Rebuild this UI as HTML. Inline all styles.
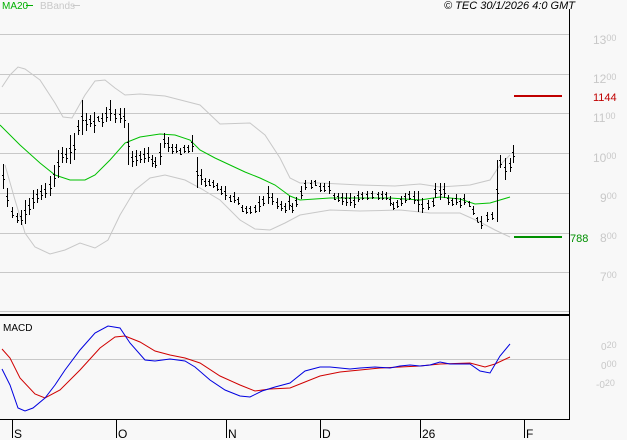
<!DOCTYPE html>
<html><head><style>
body{margin:0;background:#f8f8f8;width:627px;height:440px;overflow:hidden;font-family:"Liberation Sans",sans-serif}
</style></head><body>
<svg width="627" height="440" xmlns="http://www.w3.org/2000/svg" style="position:absolute;left:0;top:0">
<rect width="627" height="440" fill="#f8f8f8"/>
<g stroke="#c8c8c8" stroke-width="1">
<line x1="0" y1="34.5" x2="569" y2="34.5"/><line x1="0" y1="74.5" x2="569" y2="74.5"/>
<line x1="0" y1="113.5" x2="569" y2="113.5"/><line x1="0" y1="153.5" x2="569" y2="153.5"/>
<line x1="0" y1="193.5" x2="569" y2="193.5"/><line x1="0" y1="233.5" x2="569" y2="233.5"/>
<line x1="0" y1="272.5" x2="569" y2="272.5"/><line x1="0" y1="311.5" x2="569" y2="311.5"/>
<line x1="0" y1="359.5" x2="569" y2="359.5"/>
</g>
<line x1="0" y1="315" x2="569" y2="315" stroke="#000" stroke-width="2"/>
<line x1="569.5" y1="9" x2="569.5" y2="420" stroke="#000"/>
<line x1="0" y1="419.5" x2="570" y2="419.5" stroke="#000"/>
<g stroke="#000"><line x1="12.5" y1="420" x2="12.5" y2="438"/><line x1="116.5" y1="420" x2="116.5" y2="438"/><line x1="226.5" y1="420" x2="226.5" y2="438"/><line x1="320.5" y1="420" x2="320.5" y2="438"/><line x1="420.5" y1="420" x2="420.5" y2="438"/><line x1="524.5" y1="420" x2="524.5" y2="438"/></g>
<g font-size="12" fill="#000"><text x="14" y="438">S</text><text x="118" y="438">O</text><text x="228" y="438">N</text><text x="322" y="438">D</text><text x="422" y="438">26</text><text x="526" y="438">F</text></g>
<polyline fill="none" stroke="#c8c8c8" points="2,87 10,75 18,67 25,69 40,80 55,103 63,117 72,118 85,95 95,81 105,80 115,88 125,95 140,94 165,96 200,105 220,124 250,123 265,135 280,158 290,178 300,183 320,183 360,185 395,186 420,184 440,187 470,185 490,180 500,165 510,155"/>
<polyline fill="none" stroke="#c8c8c8" points="5,165 15,200 25,233 35,247 50,254 65,250 80,243 95,248 108,240 120,215 135,190 150,178 165,175 185,180 200,188 220,200 240,220 255,229 270,230 285,223 300,215 330,210 360,211 400,210 430,213 460,213 480,222 495,230 510,237"/>
<polyline fill="none" stroke="#00c000" points="0,125 20,145 40,163 55,175 70,180 85,180 95,175 110,160 125,143 140,137 160,134 175,135 190,140 200,150 215,158 230,165 245,172 260,178 275,185 290,196 300,200 330,198 360,198 390,198 420,200 440,197 460,199 475,204 490,203 500,200 510,197"/>
<g stroke="#000" id="bars"></g>
<polyline fill="none" stroke="#d00000" points="2,349 10,358 20,378 35,394 45,398 60,390 80,370 100,348 115,337 125,336 140,342 155,351 170,355 185,358 200,363 220,376 240,385 255,391 270,389 290,388 305,382 320,376 340,372 360,370 380,368 400,367 420,366 440,364 470,363 485,367 495,364 510,357"/>
<polyline fill="none" stroke="#0000e0" points="2,369 10,385 18,408 25,411 33,408 45,398 55,385 65,370 80,350 95,333 108,326 120,328 130,343 145,360 155,361 170,359 185,361 195,367 210,380 225,390 240,396 250,397 262,391 275,387 290,383 305,371 320,367 330,367 350,369 360,368 375,367 390,368 400,366 410,365 420,366 430,365 440,362 450,364 460,364 470,364 480,371 490,373 500,356 510,344"/>
<line x1="514" y1="96" x2="562" y2="96" stroke="#c00000" stroke-width="2"/>
<line x1="514" y1="237" x2="562" y2="237" stroke="#009000" stroke-width="2"/>
<text x="593" y="101" font-size="11" fill="#c00000">1144</text>
<text x="570" y="242" font-size="11" fill="#009000">788</text>
<g font-size="12" fill="#c8c8c8">
<text x="593" y="44">13<tspan font-size="9" dy="-3">00</tspan></text>
<text x="593" y="83">12<tspan font-size="9" dy="-3">00</tspan></text>
<text x="593" y="122">11<tspan font-size="9" dy="-3">00</tspan></text>
<text x="593" y="162">10<tspan font-size="9" dy="-3">00</tspan></text>
<text x="600" y="202">9<tspan font-size="9" dy="-3">00</tspan></text>
<text x="600" y="242">8<tspan font-size="9" dy="-3">00</tspan></text>
<text x="600" y="281">7<tspan font-size="9" dy="-3">00</tspan></text>
<text x="601" y="350" font-size="10">0<tspan font-size="9" dy="-2">20</tspan></text>
<text x="601" y="369" font-size="10">0<tspan font-size="9" dy="-2">00</tspan></text>
<text x="596" y="388" font-size="10">-0<tspan font-size="9" dy="-2">20</tspan></text>
</g>
<text x="2" y="9" font-size="10" fill="#00b000">MA20</text><line x1="26" y1="5.5" x2="33" y2="5.5" stroke="#00b000"/>
<text x="40" y="9" font-size="10" fill="#c8c8c8">BBands</text><line x1="73" y1="5.5" x2="80" y2="5.5" stroke="#c8c8c8"/>
<text x="575" y="9" font-size="11" font-style="italic" fill="#000" text-anchor="end">© TEC 30/1/2026 4:0 GMT</text>
<text x="3" y="331" font-size="10" fill="#000">MACD</text>
</svg>
<script>
var b=[[3,164,189],[7,188,207],[12,207,218],[17,213,223],[21,210,225],[25,200,224],[29,198,215],[33,190,209],[37,189,203],[41,185,200],[45,183,198],[50,176,196],[54,165,187],[58,150,178],[62,147,163],[66,148,163],[70,135,164],[74,133,160],[78,120,135],[82,100,135],[86,113,131],[90,115,127],[94,112,133],[98,116,121],[102,113,127],[106,107,122],[110,100,121],[115,109,123],[120,108,123],[124,108,128],[128,123,165],[132,151,167],[136,150,166],[140,151,163],[144,148,163],[148,147,162],[152,155,167],[155,157,168],[160,143,165],[164,133,148],[168,137,152],[172,144,154],[176,144,153],[180,148,155],[184,145,153],[188,145,153],[192,135,152],[197,157,188],[201,169,185],[205,178,187],[209,179,186],[213,180,188],[217,183,191],[221,186,195],[225,186,200],[230,195,202],[234,192,203],[238,197,205],[242,205,212],[246,206,214],[250,206,214],[255,205,213],[259,196,212],[263,196,206],[268,186,204],[272,193,205],[277,198,209],[281,201,211],[285,203,213],[289,196,210],[292,203,213],[296,197,207],[301,186,199],[305,180,190],[311,180,189],[315,180,186],[320,183,192],[324,183,192],[329,181,194],[334,193,200],[338,193,202],[342,193,205],[346,193,206],[350,193,206],[354,196,208],[358,191,202],[362,192,200],[367,191,200],[372,191,199],[378,192,200],[382,191,200],[386,192,200],[390,196,206],[393,202,210],[397,200,208],[401,196,206],[405,193,203],[409,191,200],[414,191,204],[418,191,212],[422,198,213],[428,200,210],[433,198,207],[435,183,198],[440,183,200],[444,183,198],[448,195,205],[452,198,206],[456,194,205],[460,198,208],[464,194,205],[469,201,207],[473,206,215],[477,217,222],[481,216,229],[487,212,222],[492,212,220],[497,160,222],[500,155,168],[505,158,180],[510,158,172],[513,145,163]];
var g=document.getElementById('bars'),s='';
b.forEach(function(a){var x=a[0]+.5,m=Math.round((a[1]+a[2])/2)+.5;s+='<line x1="'+x+'" y1="'+a[1]+'" x2="'+x+'" y2="'+a[2]+'"/><line x1="'+(x-1.5)+'" y1="'+(m-2)+'" x2="'+x+'" y2="'+(m-2)+'"/><line x1="'+x+'" y1="'+(m+2)+'" x2="'+(x+1.5)+'" y2="'+(m+2)+'"/>';});
g.innerHTML=s;
</script>
</body></html>
